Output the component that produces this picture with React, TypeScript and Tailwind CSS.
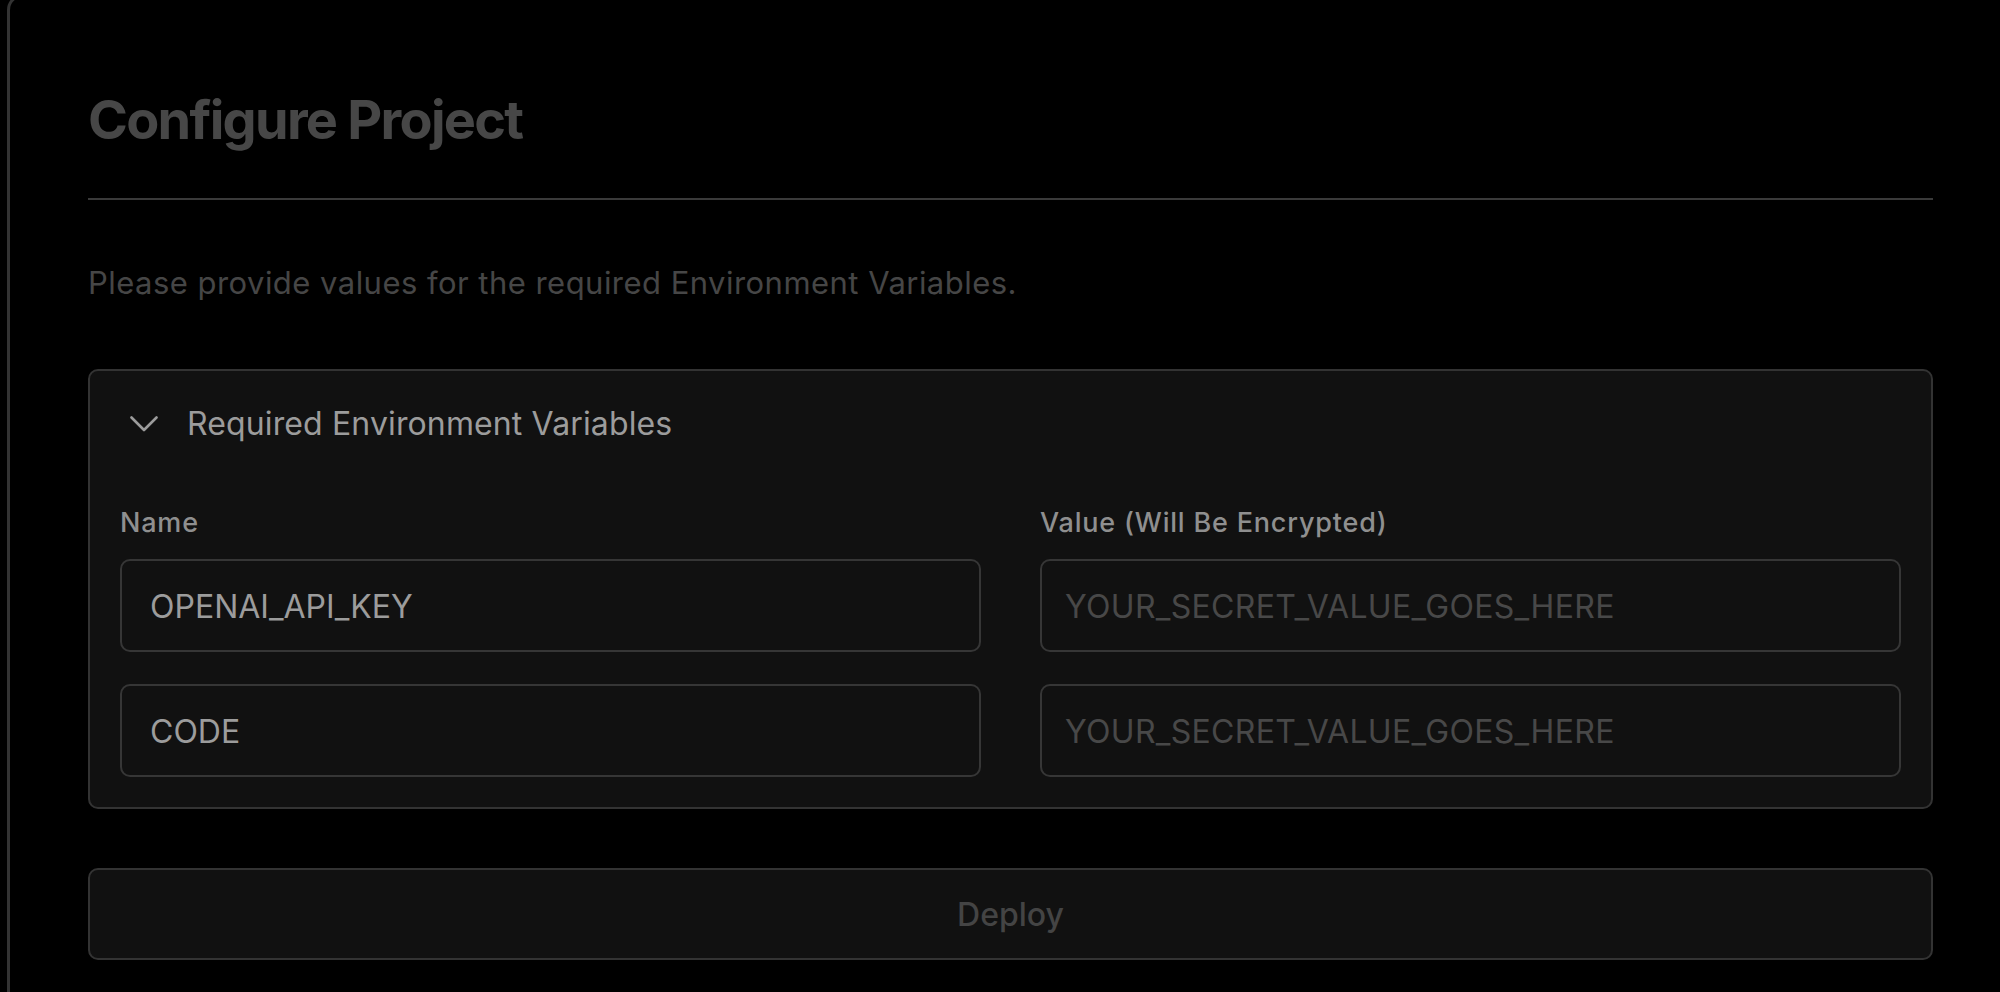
import React from "react";

function Chevron() {
  return (
    <svg width="28" height="16" viewBox="0 0 28 16" fill="none" className="shrink-0">
      <polyline
        points="1.5,1.5 14,14 26.5,1.5"
        stroke="#9c9c9c"
        strokeWidth="2.6"
        strokeLinecap="round"
        strokeLinejoin="round"
      />
    </svg>
  );
}

function Field({ value, placeholder }: { value?: string; placeholder?: string }) {
  return (
    <div
      className={
        value
          ? "flex h-[93px] items-center rounded-[10px] border-2 border-[#363636] bg-[#111111] pl-[28px] pt-[3px]"
          : "flex h-[93px] items-center rounded-[10px] border-2 border-[#363636] bg-[#111111] pl-[23px] pt-[3px]"
      }
    >
      {value ? (
        <span className="text-[32px] leading-[40px] text-[#9c9c9c]">{value}</span>
      ) : (
        <span className="text-[32px] leading-[40px] tracking-[0.01em] text-[#484848]">{placeholder}</span>
      )}
    </div>
  );
}

export default function App() {
  const rows = [{ name: "OPENAI_API_KEY" }, { name: "CODE" }];
  return (
    <div className="min-h-[992px] w-full overflow-hidden bg-black font-['Inter','Noto_Sans',sans-serif]">
      <div className="-mt-[6px] ml-[7px] min-h-[1010px] rounded-tl-[16px] border-l-[3px] border-t-[3px] border-[#333333] pl-[78px] pr-[67px] pt-[96px]">
        <h1 className="text-[54px] font-bold leading-none tracking-[-0.032em] text-[#474747]">
          Configure Project
        </h1>
        <div className="mt-[51px] h-[2px] bg-[#3a3a3a]" />
        <p className="mt-[65px] text-[31px] leading-[36px] tracking-[0.015em] text-[#464646]">
          Please provide values for the required Environment Variables.
        </p>

        <div className="mt-[68px] rounded-[10px] border-2 border-[#333333] bg-[#111111] pb-[30px]">
          <div className="flex items-center gap-[29px] pl-[40px] pt-[33px]">
            <Chevron />
            <span className="text-[32px] leading-[40px] tracking-[0.004em] text-[#9c9c9c]">
              Required Environment Variables
            </span>
          </div>

          <div className="mt-[63px] grid grid-cols-2 gap-x-[59px] px-[30px]">
            <div className="text-[27px] font-medium leading-[32px] tracking-[0.03em] text-[#8f8f8f]">Name</div>
            <div className="text-[27px] font-medium leading-[32px] tracking-[0.03em] text-[#8f8f8f]">
              Value (Will Be Encrypted)
            </div>
          </div>

          <div className="mt-[20px] flex flex-col gap-[32px] px-[30px]">
            {rows.map((r) => (
              <div key={r.name} className="grid grid-cols-2 gap-x-[59px]">
                <Field value={r.name} />
                <Field placeholder="YOUR_SECRET_VALUE_GOES_HERE" />
              </div>
            ))}
          </div>
        </div>

        <button className="mt-[59px] flex h-[92px] w-full items-center justify-center rounded-[10px] border-2 border-[#333333] bg-[#111111] pt-[2px] text-[32px] font-medium text-[#444444]">
          Deploy
        </button>
      </div>
    </div>
  );
}
